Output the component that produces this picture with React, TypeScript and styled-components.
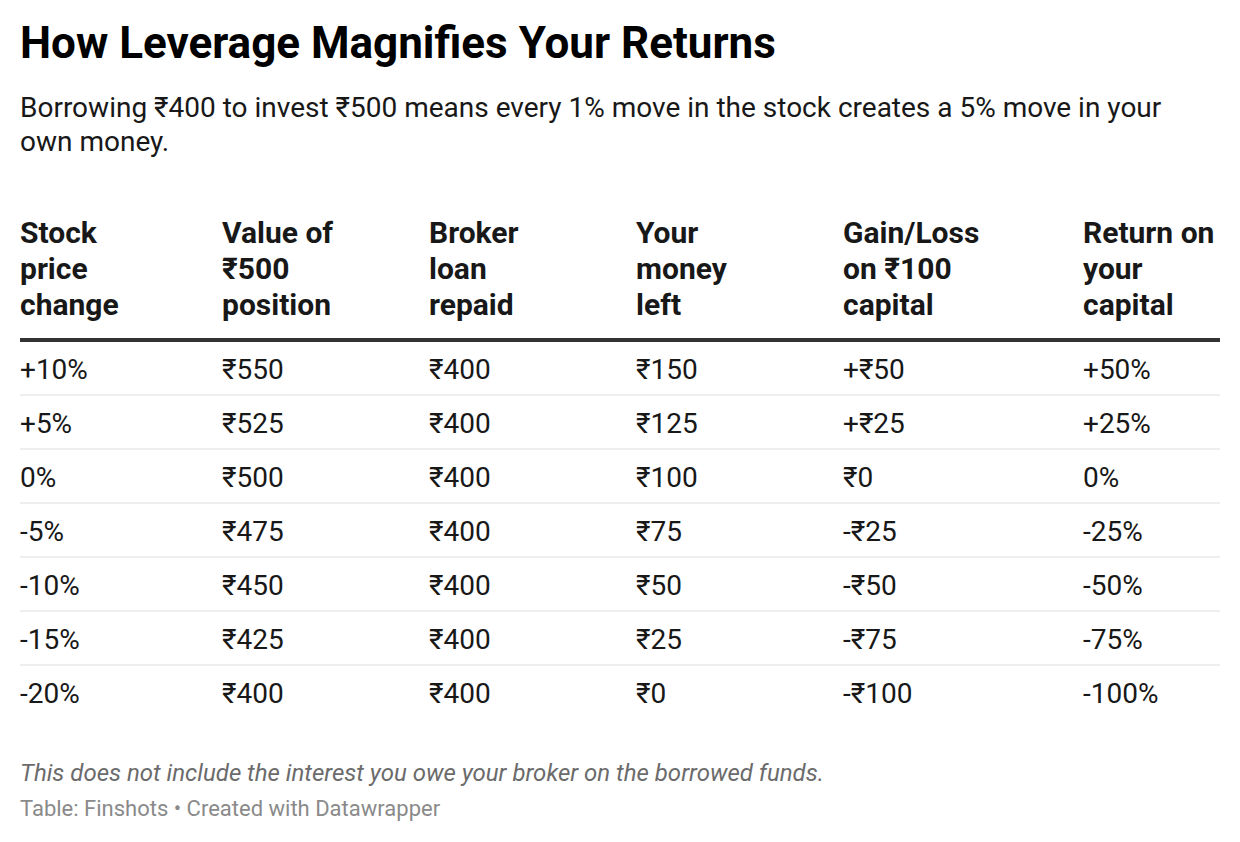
import React from "react";
import styled, { createGlobalStyle } from "styled-components";

const Global = createGlobalStyle`
  html, body { margin: 0; padding: 0; background: #fff; }
  body { font-family: Roboto, "Noto Sans", Arial, sans-serif; color: #181818; }
`;

const Page = styled.div`
  padding: 18px 20px 0 20px;
  width: 1200px;
`;

const Title = styled.h1`
  margin: 0;
  font-size: 44px;
  line-height: 50px;
  font-weight: 700;
  color: #000;
`;

const Description = styled.p`
  margin: 23px 0 0 0;
  max-width: 1190px;
  font-size: 28px;
  line-height: 34px;
  font-weight: 400;
  color: #181818;
`;

const Table = styled.table`
  margin-top: 56px;
  width: 1200px;
  border-collapse: collapse;
  table-layout: fixed;
`;

const HeadCell = styled.th`
  text-align: left;
  vertical-align: bottom;
  font-size: 30px;
  line-height: 36px;
  font-weight: 700;
  color: #181818;
  padding: 0 0 15px 0;
  border-bottom: 4px solid #333;
`;

const Row = styled.tr<{ $last?: boolean }>`
  border-bottom: ${(p) => (p.$last ? "none" : "2px solid #eeeeee")};
`;

const Cell = styled.td`
  font-size: 28px;
  line-height: 32px;
  padding: 12px 0 8px 0;
  vertical-align: middle;
  color: #181818;
`;

const Notes = styled.p`
  margin: 40px 0 0 0;
  font-size: 24px;
  line-height: 30px;
  font-style: italic;
  color: #6b6b6b;
`;

const Source = styled.p`
  margin: 6px 0 0 0;
  font-size: 22px;
  line-height: 30px;
  color: #8a8a8a;
`;

const widths = [202, 207, 207, 207, 240, 137];

const headers = [
  ["Stock", "price", "change"],
  ["Value of", "₹500", "position"],
  ["Broker", "loan", "repaid"],
  ["Your", "money", "left"],
  ["Gain/Loss", "on ₹100", "capital"],
  ["Return on", "your", "capital"],
];

const rows = [
  ["+10%", "₹550", "₹400", "₹150", "+₹50", "+50%"],
  ["+5%", "₹525", "₹400", "₹125", "+₹25", "+25%"],
  ["0%", "₹500", "₹400", "₹100", "₹0", "0%"],
  ["-5%", "₹475", "₹400", "₹75", "-₹25", "-25%"],
  ["-10%", "₹450", "₹400", "₹50", "-₹50", "-50%"],
  ["-15%", "₹425", "₹400", "₹25", "-₹75", "-75%"],
  ["-20%", "₹400", "₹400", "₹0", "-₹100", "-100%"],
];

export default function App() {
  return (
    <>
      <Global />
      <Page>
        <Title>How Leverage Magnifies Your Returns</Title>
        <Description>
          Borrowing ₹400 to invest ₹500 means every 1% move in the stock creates a 5% move in your own money.
        </Description>
        <Table>
          <colgroup>
            {widths.map((w, i) => (
              <col key={i} style={{ width: w }} />
            ))}
          </colgroup>
          <thead>
            <tr>
              {headers.map((h, i) => (
                <HeadCell key={i}>
                  {h.map((line, j) => (
                    <React.Fragment key={j}>
                      {line}
                      {j < h.length - 1 && <br />}
                    </React.Fragment>
                  ))}
                </HeadCell>
              ))}
            </tr>
          </thead>
          <tbody>
            {rows.map((r, i) => (
              <Row key={i} $last={i === rows.length - 1}>
                {r.map((c, j) => (
                  <Cell key={j}>{c}</Cell>
                ))}
              </Row>
            ))}
          </tbody>
        </Table>
        <Notes>This does not include the interest you owe your broker on the borrowed funds.</Notes>
        <Source>Table: Finshots • Created with Datawrapper</Source>
      </Page>
    </>
  );
}
